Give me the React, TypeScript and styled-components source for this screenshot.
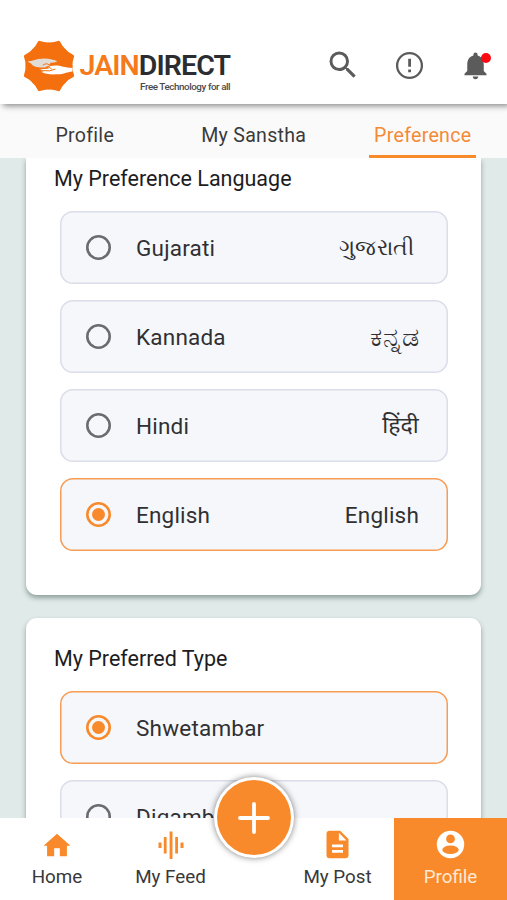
import React from "react";
import styled, { createGlobalStyle } from "styled-components";

const ORANGE = "#f98a2b";

const GlobalStyle = createGlobalStyle`
  * { box-sizing: border-box; }
  html, body { margin: 0; padding: 0; overflow: hidden; }
  body { font-family: Roboto, "Noto Sans", sans-serif; color: #303032; background: #e0eae8; }
  svg { display: block; }
`;

const Screen = styled.div`
  display: flex;
  flex-direction: column;
  width: 507px;
  height: 900px;
  overflow: hidden;
  background: #e0eae8;
`;

const Header = styled.header`
  position: relative;
  z-index: 3;
  flex: none;
  display: flex;
  align-items: flex-start;
  justify-content: space-between;
  height: 104px;
  padding: 37px 15px 0 20.5px;
  background: #fff;
  box-shadow: 3px 2px 6px rgba(0, 0, 0, 0.45);
`;

const Brand = styled.div`
  display: flex;
  gap: 3px;
`;

const BrandText = styled.div`
  display: flex;
  flex-direction: column;
  align-items: flex-end;
  padding-top: 14px;
`;

const Wordmark = styled.div`
  height: 30px;
  font-size: 28.5px;
  line-height: 30px;
  font-weight: 600;
  letter-spacing: -0.9px;
  color: #2b2d30;
  white-space: nowrap;
`;

const WordAccent = styled.span`
  color: #f57a1c;
`;

const Tagline = styled.div`
  font-size: 9.8px;
  line-height: 12px;
  font-weight: 500;
  letter-spacing: -0.42px;
  color: #4a4a4a;
  white-space: nowrap;
`;

const Actions = styled.div`
  display: flex;
  align-items: center;
  padding-top: 10px;
  color: #5b5b5b;
`;

const IconButton = styled.div<{ $gap?: number }>`
  position: relative;
  margin-left: ${(p) => p.$gap ?? 0}px;
`;

const Dot = styled.span`
  position: absolute;
  top: 4px;
  right: 1px;
  width: 10px;
  height: 10px;
  border-radius: 50%;
  background: #fb0a12;
`;

const Tabs = styled.nav`
  position: relative;
  z-index: 2;
  flex: none;
  display: grid;
  grid-template-columns: 169px 169px 169px;
  height: 54px;
  background: #fafafa;
`;

const Tab = styled.div<{ $active?: boolean }>`
  display: flex;
  justify-content: center;
  align-items: center;
  margin: 0 31px;
  padding: 12px 0 0 0.5px;
  border-bottom: 3px solid ${(p) => (p.$active ? ORANGE : "transparent")};
  font-size: 19.6px;
  letter-spacing: 0.28px;
  white-space: nowrap;
  color: ${(p) => (p.$active ? "#f58a35" : "#3a3a3c")};
`;

const Content = styled.main`
  flex: 1;
  min-height: 0;
  overflow: hidden;
  padding: 0 26px;
`;

const Card = styled.section<{ $first?: boolean }>`
  height: ${(p) => (p.$first ? 437 : 400)}px;
  margin-bottom: 23px;
  padding: ${(p) => (p.$first ? "9px" : "29px")} 34px 0;
  border-radius: ${(p) => (p.$first ? "0 0 11px 11px" : "11px")};
  background: #fff;
  box-shadow: 0 3px 5px rgba(40, 70, 65, 0.45);
`;

const CardTitle = styled.h2`
  margin: 0 0 20px -6px;
  font-size: 21.5px;
  line-height: 24px;
  font-weight: 400;
  color: #1d1d1f;
  white-space: nowrap;
`;

const Option = styled.div<{ $selected?: boolean }>`
  display: flex;
  align-items: center;
  width: 388px;
  height: 73px;
  margin-bottom: 16px;
  padding: 0 29px 0 26px;
  border-radius: 13px;
  background: #f5f7fb;
  box-shadow: inset 0 0 0 1.5px ${(p) => (p.$selected ? "#f79c55" : "#dbdde9")};
  font-size: 22.5px;
  letter-spacing: 0.2px;
`;

const Radio = styled.span<{ $selected?: boolean }>`
  display: grid;
  place-items: center;
  width: 25px;
  height: 25px;
  margin-right: 25px;
  border-radius: 50%;
  box-shadow: inset 0 0 0 2.6px ${(p) => (p.$selected ? ORANGE : "#6c6c70")};

  &::after {
    content: "";
    width: 13px;
    height: 13px;
    border-radius: 50%;
    background: ${(p) => (p.$selected ? ORANGE : "transparent")};
  }
`;

const NativeName = styled.span<{ $shift?: number; $size?: number }>`
  margin-left: auto;
  margin-right: ${(p) => p.$shift ?? 0}px;
  font-size: ${(p) => p.$size ?? 22.5}px;
  line-height: 30px;
`;

const BottomNav = styled.nav`
  position: relative;
  z-index: 2;
  flex: none;
  display: grid;
  grid-template-columns: 114px 113px 54px 113px 113px;
  height: 82px;
  background: #fff;
`;

const NavItem = styled.div<{ $active?: boolean }>`
  display: flex;
  flex-direction: column;
  align-items: center;
  padding-top: 10px;
  font-size: 18.8px;
  line-height: 24px;
  white-space: nowrap;
  color: ${(p) => (p.$active ? "#ffe9d2" : "#38383a")};
  background: ${(p) => (p.$active ? ORANGE : "transparent")};
`;

const NavIcon = styled.div<{ $light?: boolean }>`
  display: grid;
  place-items: center;
  height: 33px;
  margin-bottom: 4px;
  color: ${(p) => (p.$light ? "#fff" : ORANGE)};
`;

const AddButton = styled.div`
  position: absolute;
  top: -41px;
  left: 214px;
  display: grid;
  place-items: center;
  width: 80px;
  height: 81px;
  border: 3px solid #fff;
  border-radius: 50%;
  background: ${ORANGE};
  box-shadow: 0 0 6px rgba(0, 0, 0, 0.5);
`;

const petals = Array.from({ length: 8 }, (_, i) => i * 45);

const LogoMark = () => (
  <svg width="56" height="58" viewBox="-28 -29 56 58">
    <g fill="#f4700f">
      <circle r="22.5" />
      {petals.map((a) => (
        <path key={a} d="M0 0L-9.500 -21.500Q-5 -23 -0.500 -27L0.500 -27Q5 -23 9.500 -21.500Z" transform={`rotate(${a + 22.5})`} />
      ))}
    </g>
    <path
      d="M-21.500 -4.500C-17 -5 -12 -7.300 -7 -7.300C-2 -8 3 -6.500 8 -5C7 -3 3.500 -3.500 1 -3.300C2 -0.500 -2 2 -7 1.500C-12 1.500 -16 0.500 -18 -2.500Z"
      fill="#e2dcd6"
    />
    <path
      d="M-10.500 3C-7 3.500 -4 3 0 2.600C-2 0.500 2 -0.500 6 -0.600C12 -0.800 15 1.500 23.500 2L23.500 5.500C18 6 15 8.300 9 8.300C2 8.500 -4 8.500 -8 5.800C-5 5.500 -4 4.800 -10.500 3Z"
      fill="#fff"
    />
    <path
      d="M-6 -1Q-2 -3.500 0 -1Q3 -2 5 -1.200M-3 1Q0 -0.500 2.500 2.800M-6 4.700Q1 5.800 6 3.300"
      fill="none"
      stroke="#f4700f"
      strokeWidth="1"
      strokeLinecap="round"
    />
  </svg>
);

const SearchIcon = () => (
  <svg width="36" height="36" viewBox="0 0 24 24" fill="currentColor">
    <path d="M15.5 14h-.79l-.28-.27A6.471 6.471 0 0 0 16 9.500 6.500 6.500 0 1 0 9.500 16c1.610 0 3.090-.590 4.230-1.570l.270.280v.790l5 4.990L20.490 19l-4.990-5zm-6 0C7.010 14 5 11.990 5 9.500S7.010 5 9.500 5 14 7.010 14 9.500 11.990 14 9.500 14z" />
  </svg>
);

const AlertIcon = () => (
  <svg width="33" height="33" viewBox="0 0 33 33">
    <circle cx="16.500" cy="16.500" r="12.400" fill="none" stroke="currentColor" strokeWidth="2.300" />
    <path d="M15.200 9.800h2.800v8h-2.800zM15.200 20.500h2.800v2.700h-2.800z" fill="currentColor" />
  </svg>
);

const BellIcon = () => (
  <svg width="33" height="33" viewBox="0 0 24 24" fill="currentColor">
    <path d="M12 22c1.100 0 2-.900 2-2h-4c0 1.100.890 2 2 2zm6-6v-5c0-3.070-1.640-5.640-4.500-6.320V4c0-.830-.670-1.500-1.500-1.500s-1.500.670-1.500 1.500v.680C7.630 5.360 6 7.920 6 11v5l-2 2v1h16v-1l-2-2z" />
  </svg>
);

const HomeIcon = () => (
  <svg width="34" height="32" viewBox="0 0 24 24" preserveAspectRatio="none" fill="currentColor">
    <path d="M10 20.500v-6h4v6h5v-8h2.500L12 3.500 2.500 12.500H5v8z" />
  </svg>
);

const FeedIcon = () => (
  <svg width="26" height="28" viewBox="0 0 26 28" fill="currentColor">
    <path d="M0.500 11.500h3v5.500h-3zM5.800 6h2.800v16.500h-2.800zM11.600 0.500h2.900v27.500h-2.900zM17.200 6H20v16.500h-2.800zM22.500 11.500h3v5.500h-3z" />
  </svg>
);

const PostIcon = () => (
  <svg width="33" height="33" viewBox="0 0 24 24" fill="currentColor">
    <path d="M14 2H6c-1.100 0-1.990.900-1.990 2L4 20c0 1.100.890 2 1.990 2H18c1.100 0 2-.900 2-2V8l-6-6zm2 16H8v-2h8v2zm0-4H8v-2h8v2zm-3-5V3.500L18.500 9H13z" />
  </svg>
);

const AccountIcon = () => (
  <svg width="33" height="33" viewBox="0 0 33 33">
    <circle cx="16.500" cy="16.500" r="13.700" fill="#fff" />
    <circle cx="16.500" cy="10.900" r="4.400" fill={ORANGE} />
    <ellipse cx="16.500" cy="21.700" rx="8.200" ry="4.300" fill={ORANGE} />
  </svg>
);

const PlusIcon = () => (
  <svg width="32" height="32" viewBox="0 0 32 32">
    <path d="M16 2v28M2 16h28" stroke="#fff" strokeWidth="3.800" strokeLinecap="round" />
  </svg>
);

const languages = [
  { name: "Gujarati", native: "ગુજરાતી", shift: 5, size: 21.8 },
  { name: "Kannada", native: "ಕನ್ನಡ", size: 27 },
  { name: "Hindi", native: "हिंदी", size: 23 },
  { name: "English", native: "English", selected: true },
];

const types = [{ name: "Shwetambar", selected: true }, { name: "Digambar", selected: false }];

export default function App() {
  return (
    <>
      <GlobalStyle />
      <Screen>
        <Header>
          <Brand>
            <LogoMark />
            <BrandText>
              <Wordmark>
                <WordAccent>JAIN</WordAccent>DIRECT
              </Wordmark>
              <Tagline>Free Technology for all</Tagline>
            </BrandText>
          </Brand>
          <Actions>
            <IconButton><SearchIcon /></IconButton>
            <IconButton $gap={32}><AlertIcon /></IconButton>
            <IconButton $gap={33}><BellIcon /><Dot /></IconButton>
          </Actions>
        </Header>
        <Tabs>
          <Tab>Profile</Tab>
          <Tab>My Sanstha</Tab>
          <Tab $active>Preference</Tab>
        </Tabs>
        <Content>
          <Card $first>
            <CardTitle>My Preference Language</CardTitle>
            {languages.map((l) => (
              <Option key={l.name} $selected={l.selected}>
                <Radio $selected={l.selected} />
                {l.name}
                <NativeName $shift={l.shift} $size={l.size}>{l.native}</NativeName>
              </Option>
            ))}
          </Card>
          <Card>
            <CardTitle>My Preferred Type</CardTitle>
            {types.map((t) => (
              <Option key={t.name} $selected={t.selected}>
                <Radio $selected={t.selected} />
                {t.name}
              </Option>
            ))}
          </Card>
        </Content>
        <BottomNav>
          <NavItem><NavIcon><HomeIcon /></NavIcon>Home</NavItem>
          <NavItem><NavIcon><FeedIcon /></NavIcon>My Feed</NavItem>
          <span />
          <NavItem><NavIcon><PostIcon /></NavIcon>My Post</NavItem>
          <NavItem $active><NavIcon $light><AccountIcon /></NavIcon>Profile</NavItem>
          <AddButton><PlusIcon /></AddButton>
        </BottomNav>
      </Screen>
    </>
  );
}
